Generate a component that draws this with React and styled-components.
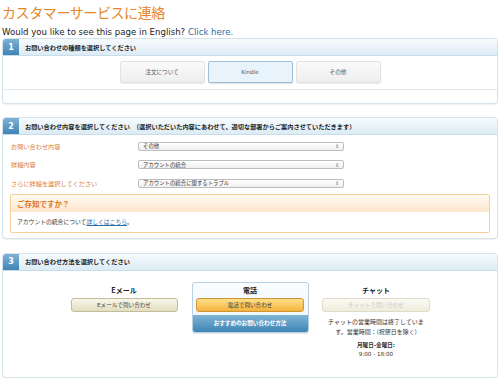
import React from 'react';
import styled, { createGlobalStyle, css } from 'styled-components';

const GlobalStyle = createGlobalStyle`
  html, body {
    margin: 0;
    padding: 0;
    background: #ffffff;
  }
  body {
    font-family: "DejaVu Sans", "Noto Sans CJK JP", sans-serif;
    color: #333;
  }
`;

const Page = styled.div`
  width: 496px;
  padding: 3px 2px 0 2px;
`;

const Title = styled.h1`
  margin: 0;
  height: 20px;
  font-family: "Noto Sans CJK JP", sans-serif;
  font-weight: 400;
  font-size: 14px;
  line-height: 19px;
  letter-spacing: -0.4px;
  color: #e8862a;
`;

const EnglishLine = styled.p`
  margin: 4px 0 0 0;
  height: 11px;
  font-size: 8.6px;
  line-height: 11px;
  color: #222;

  a {
    color: #2a6ea8;
    text-decoration: none;
  }
`;

const Section = styled.section`
  margin-top: ${p => p.$gap}px;
  border: 1px solid #d6e2ea;
  border-radius: 4px;
  background: #fff;
  box-shadow: 0 1px 1px rgba(0, 0, 0, 0.06);
  overflow: hidden;
`;

const SectionHeader = styled.div`
  display: flex;
  align-items: stretch;
  height: 16px;
  background: linear-gradient(#f7fbfd, #dcebf5);
  border-bottom: 1px solid #c9dce9;
`;

const Badge = styled.div`
  width: 16px;
  display: flex;
  align-items: center;
  justify-content: center;
  background: linear-gradient(#7fb2d6, #3f83b6);
  color: #fff;
  font-size: 8px;
  font-weight: bold;
`;

const HeaderText = styled.div`
  display: flex;
  align-items: center;
  padding-left: 6px;
  font-family: "Noto Sans CJK JP", sans-serif;
  font-size: 6.2px;
  font-weight: bold;
  color: #222;
  white-space: pre;
`;

const ChoiceRow = styled.div`
  display: flex;
  justify-content: center;
  gap: 3px;
  padding: 5px 0 6px;
  border-bottom: 1px solid #e3e9ee;
`;

const ChoiceButton = styled.div`
  width: 85px;
  height: 22px;
  box-sizing: border-box;
  display: flex;
  align-items: center;
  justify-content: center;
  border-radius: 2px;
  font-family: "DejaVu Sans", "Noto Sans CJK JP", sans-serif;
  font-size: 5.6px;
  color: #555;
  ${p => p.$active
    ? css`
      background: #e8f3fb;
      border: 1px solid #9dbfd8;
      box-shadow: 0 1px 1px rgba(0, 0, 0, 0.12);
    `
    : css`
      background: linear-gradient(#fafafa, #eeeeee);
      border: 1px solid #e2e2e2;
      box-shadow: 0 1px 1px rgba(0, 0, 0, 0.08);
    `}
`;

const EmptyRow = styled.div`
  height: 13px;
`;

const FormBody = styled.div`
  padding: 2px 7px 5px 7px;
`;

const FormRow = styled.div`
  display: flex;
  align-items: center;
  height: 18.5px;
`;

const Label = styled.div`
  width: 127px;
  padding-left: 1px;
  font-family: "Noto Sans CJK JP", sans-serif;
  font-size: 6.2px;
  color: #e0803a;
`;

const Select = styled.div`
  width: 206px;
  height: 9px;
  box-sizing: border-box;
  display: flex;
  align-items: center;
  justify-content: space-between;
  padding: 0 4px;
  border: 1px solid #bdbdbd;
  border-radius: 2px;
  background: linear-gradient(#ffffff, #efefef);
  font-family: "Noto Sans CJK JP", sans-serif;
  font-size: 5.4px;
  color: #333;
`;

const Arrows = styled.span`
  font-size: 4.5px;
  color: #777;
  line-height: 1;
`;

const Notice = styled.div`
  margin-top: 1px;
  border: 1px solid #f5cf96;
  border-radius: 2px;
`;

const NoticeHeader = styled.div`
  height: 17px;
  display: flex;
  align-items: center;
  padding-left: 6px;
  background: linear-gradient(#fffaf3, #fde6cc);
  font-family: "Noto Sans CJK JP", sans-serif;
  font-size: 7.5px;
  font-weight: bold;
  color: #d9772a;
`;

const NoticeText = styled.div`
  height: 20px;
  display: flex;
  align-items: center;
  padding-left: 6px;
  font-family: "Noto Sans CJK JP", sans-serif;
  font-size: 5.8px;
  color: #333;

  a {
    color: #2a6ea8;
    text-decoration: underline;
  }
`;

const Methods = styled.div`
  display: flex;
  justify-content: center;
  padding: 11px 0 0;
  height: 106px;
  box-sizing: border-box;
`;

const Method = styled.div`
  width: 126px;
  display: flex;
  flex-direction: column;
  align-items: center;
`;

const MethodTitle = styled.div`
  height: 15px;
  display: flex;
  align-items: center;
  font-family: "Noto Sans CJK JP", sans-serif;
  font-size: 7px;
  font-weight: bold;
  color: #222;
`;

const Recommended = styled.div`
  width: 115px;
  border: 1px solid #b7d0e2;
  border-radius: 3px;
  background: linear-gradient(#fbfdfe, #eaf3f9);
  display: flex;
  flex-direction: column;
  align-items: center;
  overflow: hidden;
  box-shadow: 0 1px 1px rgba(0, 0, 0, 0.1);
`;

const RecommendedBand = styled.div`
  align-self: stretch;
  height: 17px;
  margin-top: 3px;
  display: flex;
  align-items: center;
  justify-content: center;
  background: linear-gradient(#7fb4d6, #3f85b5);
  color: #fff;
  font-family: "Noto Sans CJK JP", sans-serif;
  font-size: 5.6px;
  font-weight: bold;
`;

const ActionButton = styled.div`
  width: ${p => p.$w}px;
  height: 14px;
  box-sizing: border-box;
  display: flex;
  align-items: center;
  justify-content: center;
  border-radius: 3px;
  font-family: "DejaVu Sans", "Noto Sans CJK JP", sans-serif;
  font-size: 5.6px;
  ${p => p.$kind === 'orange'
    ? css`
      background: linear-gradient(#fde08a, #f4b33c);
      border: 1px solid #cf9435;
      color: #333;
    `
    : css`
      background: linear-gradient(#f8f7ea, #e2dec0);
      border: 1px solid #c2bd98;
      color: #444;
    `}
  ${p => p.$disabled && css`
    opacity: 0.55;
    color: #999;
  `}
`;

const ChatInfo = styled.div`
  margin-top: 5px;
  width: 100px;
  text-align: center;
  font-family: "Noto Sans CJK JP", sans-serif;
  font-size: 6px;
  line-height: 10px;
  color: #333;
  line-break: anywhere;
`;

const Hours = styled.div`
  margin-top: 4px;
  text-align: center;
  font-family: "DejaVu Sans", "Noto Sans CJK JP", sans-serif;
  font-size: 5.6px;
  line-height: 9px;
  color: #333;

  b {
    display: block;
  }
`;

function StepHeader({ num, children }) {
  return (
    <SectionHeader>
      <Badge>{num}</Badge>
      <HeaderText>{children}</HeaderText>
    </SectionHeader>
  );
}

export default function App() {
  const fields = [
    { label: 'お問い合わせ内容', value: 'その他' },
    { label: '詳細内容', value: 'アカウントの統合' },
    { label: 'さらに詳細を選択してください', value: 'アカウントの統合に関するトラブル' },
  ];

  return (
    <Page>
      <GlobalStyle />
      <Title>カスタマーサービスに連絡</Title>
      <EnglishLine>
        Would you like to see this page in English? <a href="#">Click here.</a>
      </EnglishLine>

      <Section $gap={0}>
        <StepHeader num="1">お問い合わせの種類を選択してください</StepHeader>
        <ChoiceRow>
          <ChoiceButton>注文について</ChoiceButton>
          <ChoiceButton $active>Kindle</ChoiceButton>
          <ChoiceButton>その他</ChoiceButton>
        </ChoiceRow>
        <EmptyRow />
      </Section>

      <Section $gap={13}>
        <StepHeader num="2">
          {'お問い合わせ内容を選択してください　（選択いただいた内容にあわせて、適切な部署からご案内させていただきます）'}
        </StepHeader>
        <FormBody>
          {fields.map(f => (
            <FormRow key={f.label}>
              <Label>{f.label}</Label>
              <Select>
                <span>{f.value}</span>
                <Arrows>⇕</Arrows>
              </Select>
            </FormRow>
          ))}
          <Notice>
            <NoticeHeader>ご存知ですか？</NoticeHeader>
            <NoticeText>
              アカウントの統合について<a href="#">詳しくはこちら</a>。
            </NoticeText>
          </Notice>
        </FormBody>
      </Section>

      <Section $gap={14}>
        <StepHeader num="3">お問い合わせ方法を選択してください</StepHeader>
        <Methods>
          <Method>
            <MethodTitle style={{ marginTop: 1 }}>Eメール</MethodTitle>
            <ActionButton $w={107}>Eメールで問い合わせ</ActionButton>
          </Method>
          <Method>
            <Recommended>
              <MethodTitle>電話</MethodTitle>
              <ActionButton $w={108} $kind="orange">電話で問い合わせ</ActionButton>
              <RecommendedBand>おすすめのお問い合わせ方法</RecommendedBand>
            </Recommended>
          </Method>
          <Method>
            <MethodTitle style={{ marginTop: 1 }}>チャット</MethodTitle>
            <ActionButton $w={108} $disabled>チャットで問い合わせ</ActionButton>
            <ChatInfo>チャットの営業時間は終了しています。営業時間：(祝祭日を除く)</ChatInfo>
            <Hours>
              <b>月曜日-金曜日:</b>
              9:00 - 18:00
            </Hours>
          </Method>
        </Methods>
      </Section>
    </Page>
  );
}
